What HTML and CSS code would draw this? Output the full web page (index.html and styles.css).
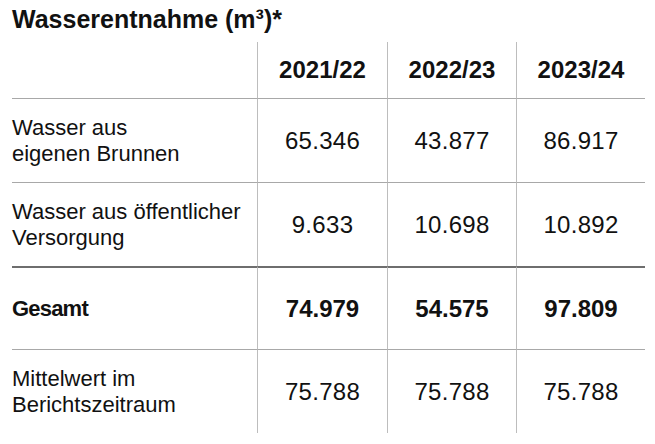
FILE: index.html
```html
<!DOCTYPE html>
<html lang="de">
<head>
<meta charset="utf-8">
<title>Wasserentnahme</title>
<link rel="stylesheet" href="styles.css">
</head>
<body>
<h1 class="title">Wasserentnahme (m³)*</h1>
<div class="grid">
  <div class="cell label head"></div>
  <div class="cell val head bold">2021/22</div>
  <div class="cell val head bold">2022/23</div>
  <div class="cell val head bold">2023/24</div>

  <div class="cell label row">Wasser aus<br>eigenen Brunnen</div>
  <div class="cell val row">65.346</div>
  <div class="cell val row">43.877</div>
  <div class="cell val row">86.917</div>

  <div class="cell label row">Wasser aus öffentlicher<br>Versorgung</div>
  <div class="cell val row">9.633</div>
  <div class="cell val row">10.698</div>
  <div class="cell val row">10.892</div>

  <div class="cell label row total bold">Gesamt</div>
  <div class="cell val row total bold">74.979</div>
  <div class="cell val row total bold">54.575</div>
  <div class="cell val row total bold">97.809</div>

  <div class="cell label row">Mittelwert im<br>Berichtszeitraum</div>
  <div class="cell val row">75.788</div>
  <div class="cell val row">75.788</div>
  <div class="cell val row">75.788</div>
</div>
</body>
</html>
```

FILE: styles.css
```css
html, body {
  margin: 0;
  padding: 0;
  background: #ffffff;
}

body {
  padding: 0 12px;
  font-family: "Liberation Sans", Arial, sans-serif;
  color: #111111;
}

.title {
  margin: 0 0 8px 0;
  padding-top: 4px;
  font-size: 25px;
  line-height: 30px;
  font-weight: 700;
  letter-spacing: 0;
}

.grid {
  display: grid;
  grid-template-columns: 245px 130px 129px 129px;
  width: 633px;
}

.cell {
  display: flex;
  align-items: center;
  box-sizing: border-box;
}

.head {
  height: 56px;
}

.row {
  height: 84px;
  border-top: 1px solid #a8a8a8;
}

.row.total {
  height: 83px;
  border-top: 2px solid #6e6e6e;
}

.label {
  font-size: 22px;
  line-height: 26px;
}

.val {
  justify-content: center;
  border-left: 1px solid #bdbdbd;
  font-size: 24px;
  letter-spacing: 0.3px;
}

.bold {
  font-weight: 700;
}

.label.bold {
  font-size: 22px;
  letter-spacing: -0.8px;
}

.val.bold {
  letter-spacing: 0;
}
```
